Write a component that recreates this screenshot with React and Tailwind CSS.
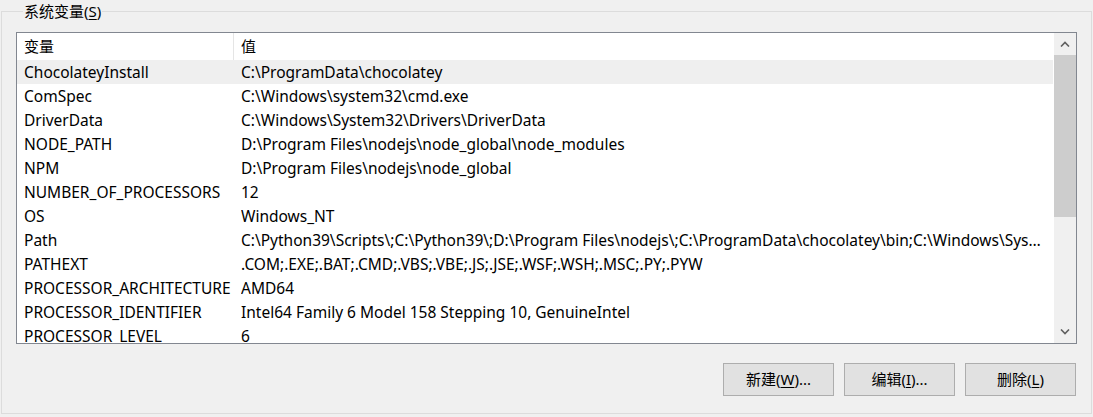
const rows = [
  ['ChocolateyInstall', 'C:\\ProgramData\\chocolatey'],
  ['ComSpec', 'C:\\Windows\\system32\\cmd.exe'],
  ['DriverData', 'C:\\Windows\\System32\\Drivers\\DriverData'],
  ['NODE_PATH', 'D:\\Program Files\\nodejs\\node_global\\node_modules'],
  ['NPM', 'D:\\Program Files\\nodejs\\node_global'],
  ['NUMBER_OF_PROCESSORS', '12'],
  ['OS', 'Windows_NT'],
  ['Path', 'C:\\Python39\\Scripts\\;C:\\Python39\\;D:\\Program Files\\nodejs\\;C:\\ProgramData\\chocolatey\\bin;C:\\Windows\\System32;C:\\Windows;C:\\Windows\\System32\\Wbem'],
  ['PATHEXT', '.COM;.EXE;.BAT;.CMD;.VBS;.VBE;.JS;.JSE;.WSF;.WSH;.MSC;.PY;.PYW'],
  ['PROCESSOR_ARCHITECTURE', 'AMD64'],
  ['PROCESSOR_IDENTIFIER', 'Intel64 Family 6 Model 158 Stepping 10, GenuineIntel'],
  ['PROCESSOR_LEVEL', '6'],
];

const Button = ({ label, hotkey, dots }) => (
  <button className="w-[111px] h-[33px] bg-[#e1e1e1] border border-[#adadad] text-[15px] text-[#000] flex items-center justify-center">
    {label}(<span className="underline underline-offset-2">{hotkey}</span>){dots ? '...' : ''}
  </button>
);

const App = () => {
  return (
    <div className="w-[1093px] h-[417px] bg-[#f0f0f0] overflow-hidden font-['Noto_Sans','Noto_Sans_CJK_SC',sans-serif] text-[#000]">
      <fieldset className="ml-[1px] w-[1088px] h-[414px] border border-[#dcdcdc] px-[14px] pb-0 pt-[10px]">
        <legend className="ml-[7px] px-[1px] text-[15px] leading-[22px]">
          系统变量(<span className="underline underline-offset-2">S</span>)
        </legend>

        {/* list view */}
        <div className="w-[1061px] h-[312px] border border-[#828790] bg-white flex">
          <div className="flex-1 overflow-hidden mr-[1px]">
            {/* header */}
            <div className="flex h-[27px] text-[15px] items-center">
              <div className="w-[217px] h-full pl-[7px] flex items-center border-r border-[#e5e5e5]">变量</div>
              <div className="pl-[7px] flex items-center h-full">值</div>
            </div>
            {rows.map(([name, value], i) => (
              <div
                key={name}
                className={`flex h-[24px] items-center pt-[2px] text-[15.5px] ${i === 0 ? 'bg-[#efefef]' : ''}`}
              >
                <div className="w-[224px] shrink-0 pl-[7px] whitespace-nowrap">{name}</div>
                <div className="flex-1 min-w-0 pr-[9px] truncate">{value}</div>
              </div>
            ))}
          </div>

          {/* scrollbar */}
          <div className="w-[22px] bg-[#f0f0f0] flex flex-col">
            <div className="h-[22px] flex items-center justify-center">
              <svg width="10" height="6" viewBox="0 0 10 6" fill="none">
                <path d="M1 5.5 L5 1.5 L9 5.5" stroke="#606060" strokeWidth="1.6" />
              </svg>
            </div>
            <div className="h-[162px] bg-[#cdcdcd]" />
            <div className="flex-1" />
            <div className="h-[22px] flex items-center justify-center">
              <svg width="10" height="6" viewBox="0 0 10 6" fill="none">
                <path d="M1 0.5 L5 4.5 L9 0.5" stroke="#606060" strokeWidth="1.6" />
              </svg>
            </div>
          </div>
        </div>

        {/* buttons */}
        <div className="flex justify-end gap-[10px] mt-[19px] w-[1060px]">
          <Button label="新建" hotkey="W" dots />
          <Button label="编辑" hotkey="I" dots />
          <Button label="删除" hotkey="L" />
        </div>
      </fieldset>
    </div>
  );
};

export default App;
